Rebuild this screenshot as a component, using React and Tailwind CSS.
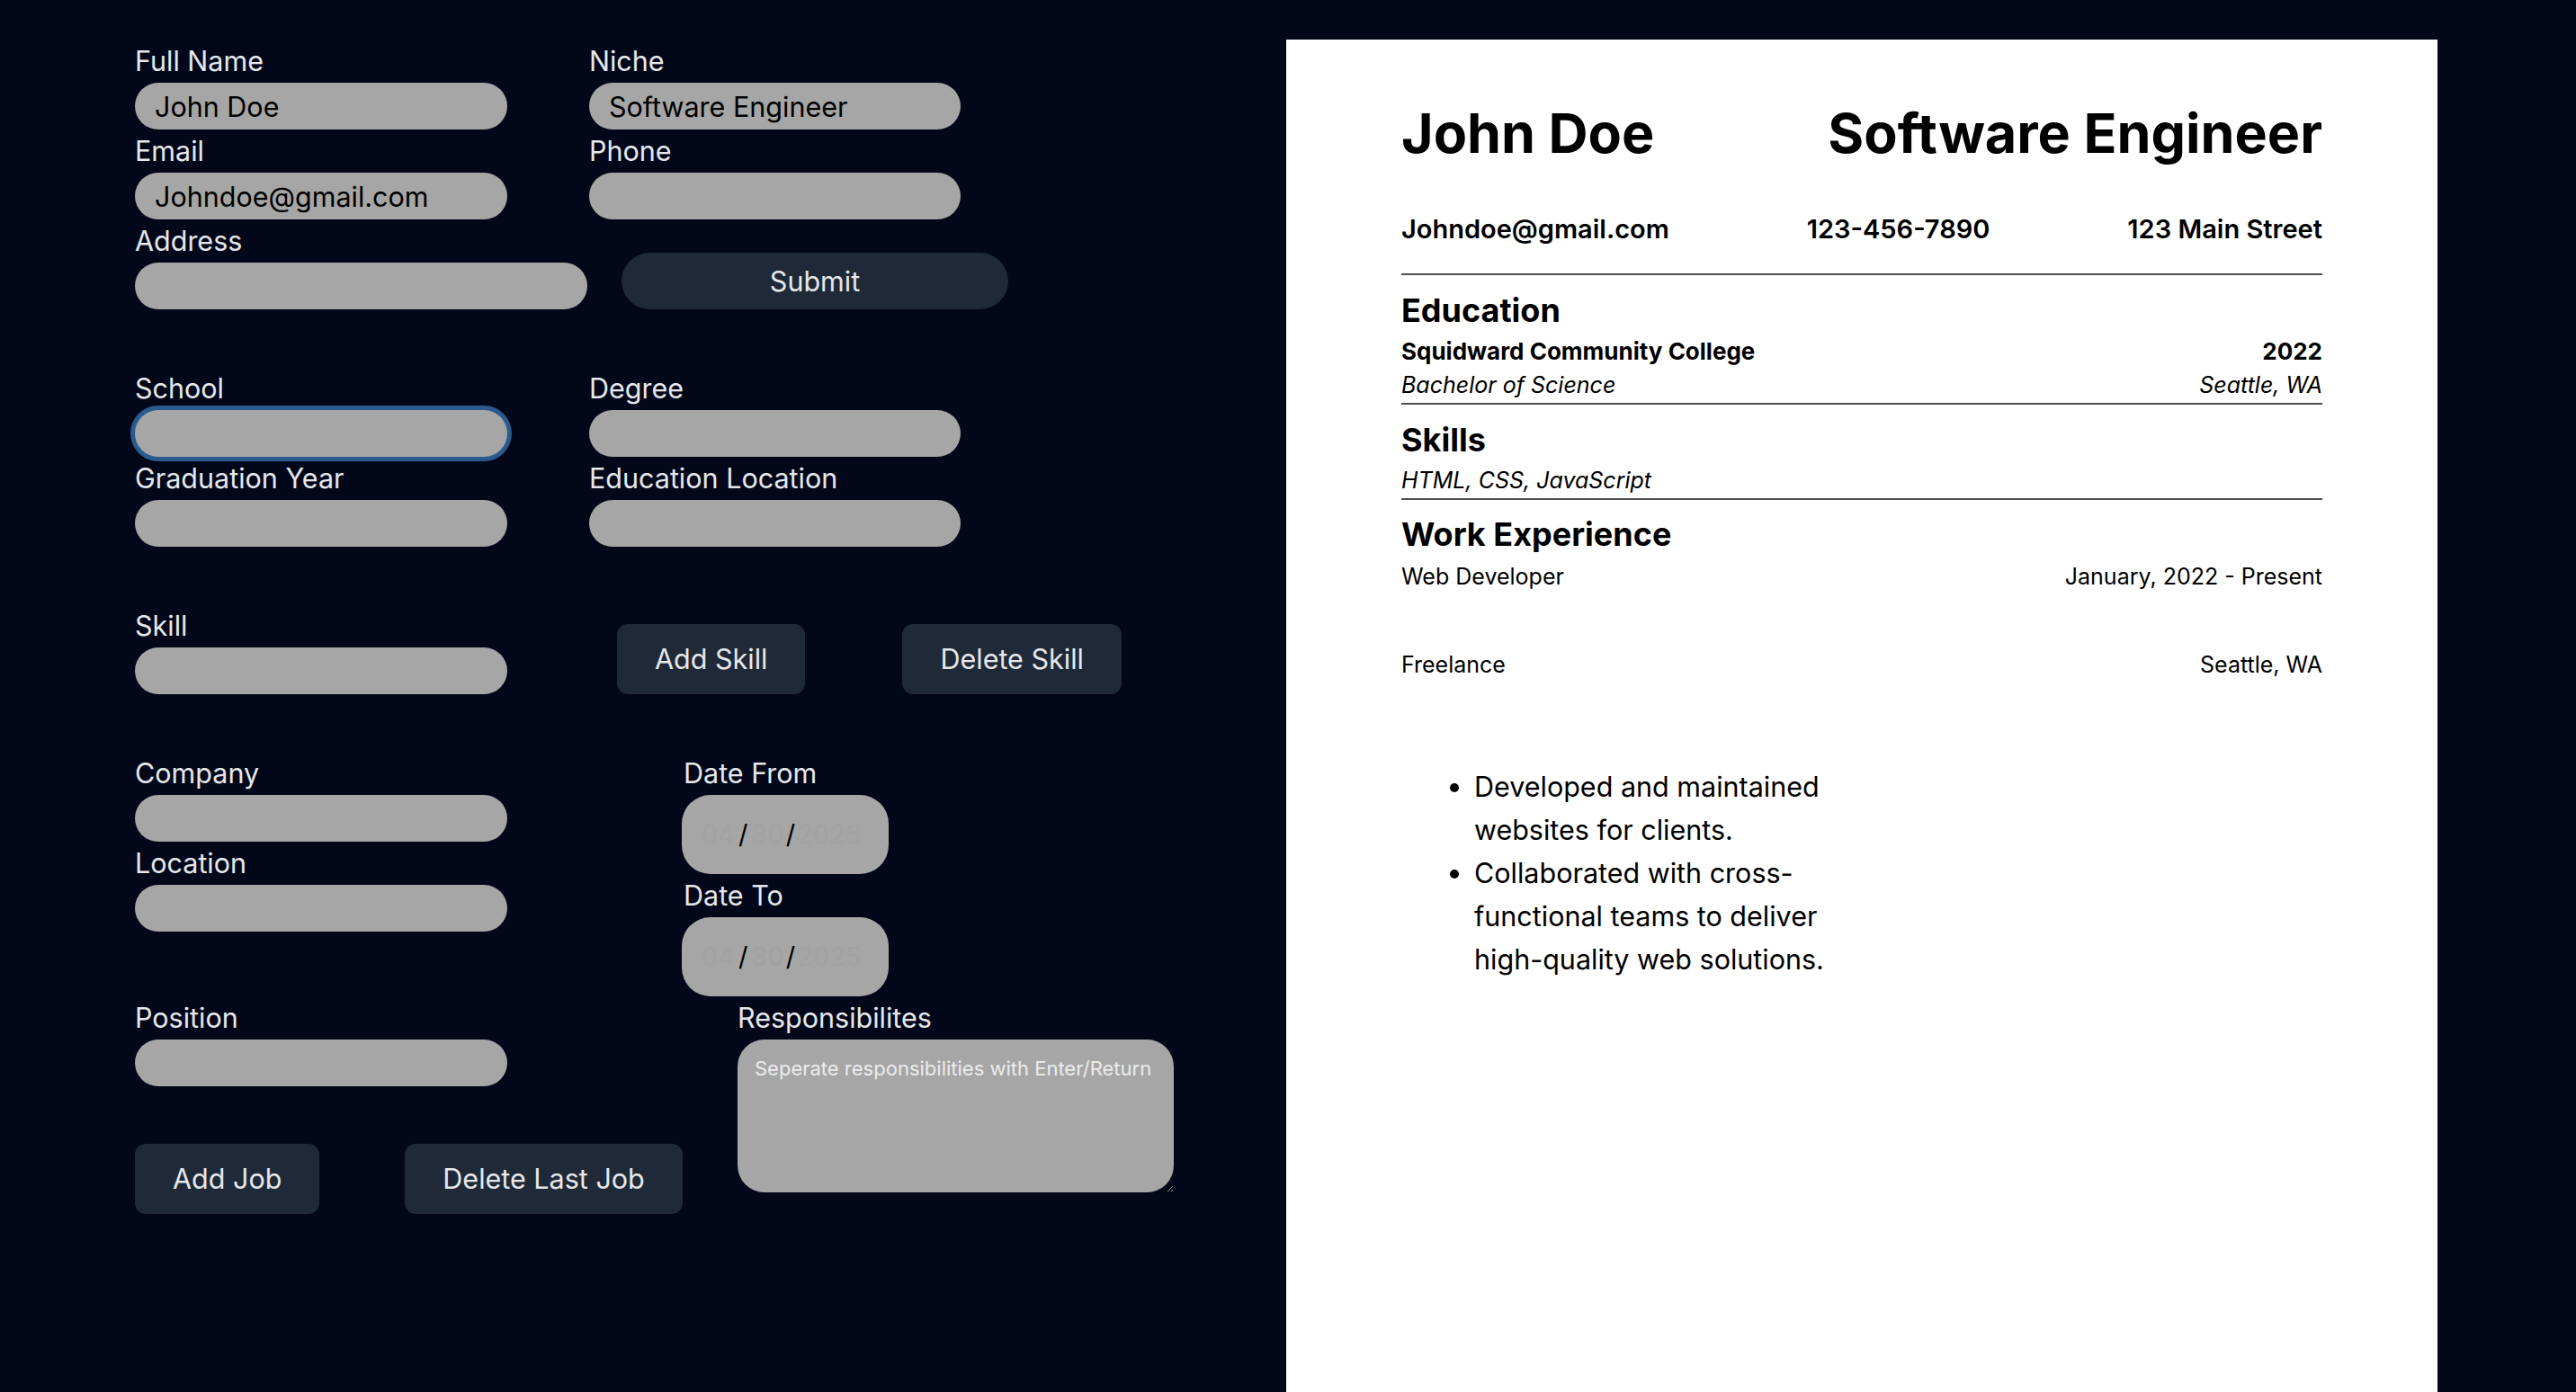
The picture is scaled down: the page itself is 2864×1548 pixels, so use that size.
import React from 'react'

const font = { fontFamily: 'Inter, "Noto Sans", sans-serif' }

function Label({ children, className = '' }) {
  return <label className={`block text-[30.5px] leading-[48px] text-[#e5e7eb] ${className}`}>{children}</label>
}

function Field({ label, value = '', w = 'w-[414px]', focus = false }) {
  return (
    <div className={w}>
      <Label>{label}</Label>
      <input
        readOnly
        value={value}
        className={`block h-[52px] w-full rounded-full bg-[#a6a6a6] px-[22px] text-[30.5px] text-black outline-none ${focus ? 'ring-[5px] ring-[#2b5a8e]' : ''}`}
      />
    </div>
  )
}

function Btn({ children, className = '' }) {
  return (
    <button className={`h-[78px] rounded-[12px] bg-[#1f2937] px-[42px] text-[30.5px] leading-[48px] text-[#e5e7eb] ${className}`}>
      {children}
    </button>
  )
}

function DateBox({ label }) {
  return (
    <div className="w-[230px]">
      <Label className="pl-[2px]">{label}</Label>
      <div className="flex h-[88px] items-center rounded-[32px] bg-[#a6a6a6] pl-[22px] text-[29px] text-[#a2a2a2]">
        <span>04</span>
        <span className="px-[4px] text-black">/</span>
        <span>30</span>
        <span className="px-[2px] text-black">/</span>
        <span>2025</span>
      </div>
    </div>
  )
}

function Row({ left, right, bold = false, italic = false, className = '' }) {
  return (
    <div className={`flex justify-between leading-[32px] text-black ${bold ? 'text-[26px] font-bold' : 'text-[25px]'} ${italic ? 'italic' : ''} ${className}`}>
      <span>{left}</span>
      <span>{right}</span>
    </div>
  )
}

function Rule({ className = '' }) {
  return <div className={`h-[2px] bg-[#505050] ${className}`} />
}

export default function App() {
  return (
    <div style={font} className="flex h-[1548px] overflow-hidden bg-[#03071a]">
      {/* form side */}
      <div className="w-[1430px] shrink-0 pl-[150px] pt-[44px]">
        <div className="grid grid-cols-[414px_413px] gap-x-[91px]">
          <Field label="Full Name" value="John Doe" />
          <Field label="Niche" value="Software Engineer" w="w-[413px]" />
          <Field label="Email" value="Johndoe@gmail.com" />
          <Field label="Phone" w="w-[413px]" />
        </div>
        <div className="flex items-end">
          <Field label="Address" w="w-[503px]" />
          <button className="ml-[38px] h-[63px] w-[430px] rounded-[32px] bg-[#1f2937] text-[30.5px] text-[#e5e7eb]">Submit</button>
        </div>

        <div className="mt-[64px] grid grid-cols-[414px_413px] gap-x-[91px]">
          <Field label="School" focus />
          <Field label="Degree" w="w-[413px]" />
          <Field label="Graduation Year" />
          <Field label="Education Location" w="w-[413px]" />
        </div>

        <div className="mt-[64px] flex items-end">
          <Field label="Skill" />
          <Btn className="ml-[122px]">Add Skill</Btn>
          <Btn className="ml-[108px]">Delete Skill</Btn>
        </div>

        <div className="mt-[64px] flex">
          <div className="w-[414px]">
            <Field label="Company" />
            <Field label="Location" />
          </div>
          <div className="ml-[194px]">
            <DateBox label="Date From" />
            <DateBox label="Date To" />
          </div>
        </div>

        <div className="flex">
          <div className="w-[670px]">
            <Field label="Position" />
            <div className="mt-[64px] flex">
              <Btn className="h-[77px]">Add Job</Btn>
              <Btn className="ml-[95px] h-[77px]">Delete Last Job</Btn>
            </div>
          </div>
          <div className="w-[485px]">
            <Label>Responsibilites</Label>
            <textarea
              readOnly
              placeholder="Seperate responsibilities with Enter/Return"
              className="block h-[170px] w-full rounded-[30px] bg-[#a6a6a6] px-[19px] py-[16px] text-[22px] leading-[32px] text-black outline-none placeholder:text-[#ececec]"
            />
          </div>
        </div>
      </div>

      {/* resume preview */}
      <div className="mt-[44px] w-[1280px] shrink-0 bg-white px-[128px] pt-[68px]">
        <div className="flex justify-between text-[61px] font-bold leading-[72px] text-black">
          <h1>John Doe</h1>
          <h1>Software Engineer</h1>
        </div>
        <div className="mt-[51px] flex justify-between text-[29px] font-semibold leading-[40px] text-black">
          <span>Johndoe@gmail.com</span>
          <span>123-456-7890</span>
          <span>123 Main Street</span>
        </div>
        <Rule className="mt-[29px]" />

        <h2 className="mt-[15px] text-[36px] font-bold leading-[48px] text-black">Education</h2>
        <Row className="mt-[6px]" left="Squidward Community College" right="2022" bold />
        <Row className="mt-[5px]" left="Bachelor of Science" right="Seattle, WA" italic />
        <Rule className="mt-[4px]" />

        <h2 className="mt-[15px] text-[36px] font-bold leading-[48px] text-black">Skills</h2>
        <p className="mt-[5px] text-[25px] italic leading-[32px] text-black">HTML, CSS, JavaScript</p>
        <Rule className="mt-[4px]" />

        <h2 className="mt-[14px] text-[36px] font-bold leading-[48px] text-black">Work Experience</h2>
        <Row className="mt-[7px]" left="Web Developer" right="January, 2022 - Present" />
        <Row className="mt-[66px]" left="Freelance" right="Seattle, WA" />

        <ul className="mt-[96px] w-[490px] list-disc pl-[81px] text-[30.5px] leading-[48px] text-black">
          <li>Developed and maintained websites for clients.</li>
          <li>Collaborated with cross-functional teams to deliver high-quality web solutions.</li>
        </ul>
      </div>
    </div>
  )
}
